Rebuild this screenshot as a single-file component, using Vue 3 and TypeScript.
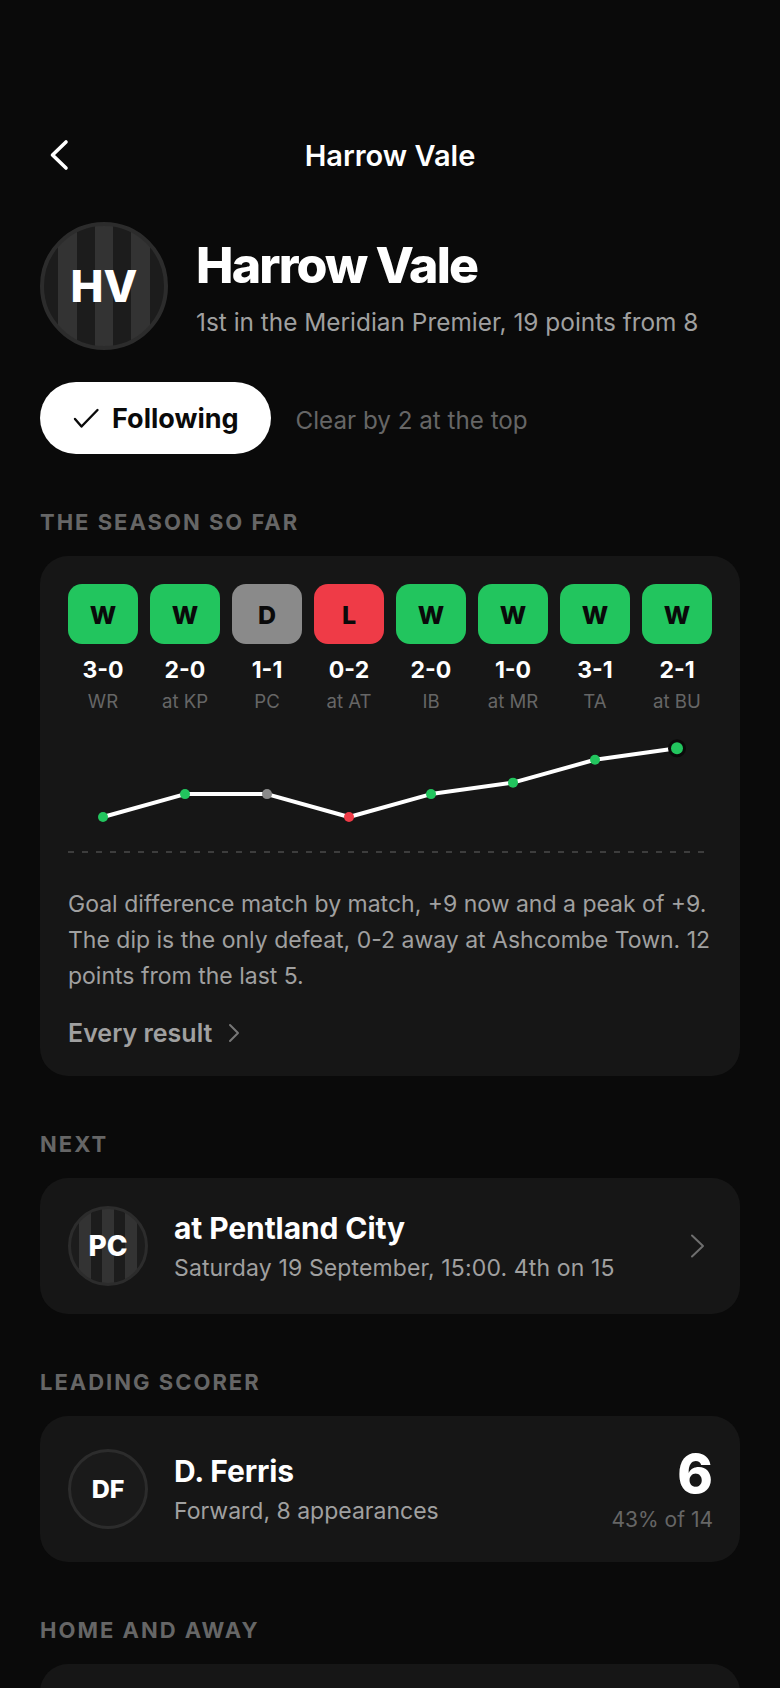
<script setup lang="ts">
import { computed } from 'vue';

interface Match {
    result: 'W' | 'D' | 'L',
    score: string,
    opponent: string,
    diff: number,
}

const matches: Match[] = [
    { result: 'W', score: '3-0', opponent: 'WR', diff: 3 },
    { result: 'W', score: '2-0', opponent: 'at KP', diff: 5 },
    { result: 'D', score: '1-1', opponent: 'PC', diff: 5 },
    { result: 'L', score: '0-2', opponent: 'at AT', diff: 3 },
    { result: 'W', score: '2-0', opponent: 'IB', diff: 5 },
    { result: 'W', score: '1-0', opponent: 'at MR', diff: 6 },
    { result: 'W', score: '3-1', opponent: 'TA', diff: 8 },
    { result: 'W', score: '2-1', opponent: 'at BU', diff: 9 },
];

const colours = { W: '#22c55e', D: '#8a8a8a', L: '#ef3b47' };

const points = computed(() => matches.map((m, i) => ({
    x: 35 + i * 82,
    y: 80 - (m.diff - 3) * 11.45,
    fill: colours[m.result],
    last: i === matches.length - 1,
})));

const line = computed(() => points.value.map((p) => `${p.x},${p.y}`).join(' '));
</script>

<template>
    <div class="screen">
        <header class="topbar">
            <svg class="back" width="32" height="32" viewBox="0 0 32 32" fill="none">
                <path d="M22 3 L8.5 16 L22 29" stroke="#fff" stroke-width="3.6" stroke-linecap="round" stroke-linejoin="round" />
            </svg>
            <span class="topbar-title">Harrow Vale</span>
        </header>

        <section class="hero">
            <div class="crest crest-large">HV</div>
            <div class="hero-text">
                <h1>Harrow Vale</h1>
                <p>1st in the Meridian Premier, 19 points from 8</p>
            </div>
        </section>

        <div class="follow-row">
            <button class="follow">
                <svg width="28" height="28" viewBox="0 0 28 28" fill="none">
                    <path d="M3 15 L9.5 22.5 L25.5 6" stroke="#0a0a0a" stroke-width="2.4" stroke-linecap="round" stroke-linejoin="round" />
                </svg>
                Following
            </button>
            <span class="follow-note">Clear by 2 at the top</span>
        </div>

        <h2 class="label">THE SEASON SO FAR</h2>
        <div class="card season">
            <div class="form">
                <div v-for="(m, i) in matches" :key="i" class="match">
                    <div class="tile" :class="'tile-' + m.result">{{ m.result }}</div>
                    <div class="score">{{ m.score }}</div>
                    <div class="opponent">{{ m.opponent }}</div>
                </div>
            </div>
            <svg class="chart" width="644" height="120" viewBox="0 0 644 120" fill="none">
                <line x1="0" y1="115" x2="636" y2="115" stroke="#3d3d3d" stroke-width="2" stroke-dasharray="6 8" />
                <polyline :points="line" stroke="#fff" stroke-width="4" stroke-linejoin="round" />
                <template v-for="p in points" :key="p.x">
                    <circle v-if="p.last" :cx="p.x" :cy="p.y" r="9" fill="#0a0a0a" />
                    <circle :cx="p.x" :cy="p.y" :r="p.last ? 6 : 5" :fill="p.fill" />
                </template>
            </svg>
            <p class="summary">Goal difference match by match, +9 now and a peak of +9. The dip is the only defeat, 0-2 away at Ashcombe Town. 12 points from the last 5.</p>
            <div class="every">
                Every result
                <svg width="12" height="20" viewBox="0 0 12 20" fill="none">
                    <path d="M2 2 L10 10 L2 18" stroke="#777" stroke-width="2" stroke-linecap="round" stroke-linejoin="round" />
                </svg>
            </div>
        </div>

        <h2 class="label">NEXT</h2>
        <div class="card row">
            <div class="crest crest-small">PC</div>
            <div class="row-text">
                <div class="row-title">at Pentland City</div>
                <div class="row-sub row-sub-next">Saturday 19 September, 15:00. 4th on 15</div>
            </div>
            <svg class="row-chevron" width="16" height="24" viewBox="0 0 16 24" fill="none">
                <path d="M2 1.5 L13 12 L2 22.5" stroke="#6e6e6e" stroke-width="2" stroke-linecap="round" stroke-linejoin="round" />
            </svg>
        </div>

        <h2 class="label">LEADING SCORER</h2>
        <div class="card row">
            <div class="player">DF</div>
            <div class="row-text">
                <div class="row-title">D. Ferris</div>
                <div class="row-sub">Forward, 8 appearances</div>
            </div>
            <div class="goals">
                <div class="goals-count">6</div>
                <div class="goals-share">43% of 14</div>
            </div>
        </div>

        <h2 class="label">HOME AND AWAY</h2>
        <div class="card home-away"></div>
    </div>
</template>

<style scoped>
.screen {
    height: 1688px;
    overflow: hidden;
    box-sizing: border-box;
    padding: 130px 40px 0;
    background: #0a0a0a;
    color: #fff;
    font-family: Inter, 'Liberation Sans', sans-serif;
}

.topbar {
    position: relative;
    display: flex;
    align-items: center;
    justify-content: center;
    height: 50px;
}

.back {
    position: absolute;
    left: 4px;
    top: 9px;
}

.topbar-title {
    font-size: 29px;
    font-weight: 600;
}

.hero {
    display: flex;
    align-items: center;
    gap: 28px;
    margin-top: 42px;
}

.crest {
    box-sizing: border-box;
    flex: none;
    display: flex;
    align-items: center;
    justify-content: center;
    border: 4px solid #2c2c2c;
    border-radius: 50%;
    background: linear-gradient(90deg, #1c1c1c 14.28%, #333 14.28% 28.57%, #1c1c1c 28.57% 42.85%, #333 42.85% 57.14%, #1c1c1c 57.14% 71.42%, #333 71.42% 85.71%, #1c1c1c 85.71%) border-box;
    font-weight: 800;
}

.crest-large {
    width: 128px;
    height: 128px;
    font-size: 44px;
}

.crest-small {
    width: 80px;
    height: 80px;
    font-size: 28px;
    border-width: 3px;
}

.hero-text h1 {
    margin: 0;
    font-size: 50px;
    line-height: 60px;
    font-weight: 800;
    letter-spacing: -1.8px;
}

.hero-text p {
    margin: 11px 0 0;
    font-size: 24.4px;
    line-height: 32px;
    color: #a0a0a0;
}

.follow-row {
    display: flex;
    align-items: center;
    gap: 25px;
    margin-top: 32px;
}

.follow {
    display: flex;
    align-items: center;
    gap: 12px;
    height: 72px;
    padding: 0 32px;
    border: none;
    border-radius: 36px;
    background: #fff;
    color: #0a0a0a;
    font-family: inherit;
    font-size: 27px;
    font-weight: 700;
}

.follow-note {
    padding-top: 4px;
    font-size: 24.2px;
    color: #666;
}

.label {
    margin: 54px 0 20px;
    font-size: 22px;
    line-height: 28px;
    font-weight: 700;
    letter-spacing: 2px;
    color: #666;
}

.card {
    background: #161616;
    border-radius: 28px;
}

.season {
    padding: 28px 28px 25px;
}

.form {
    display: grid;
    grid-template-columns: repeat(8, 70px);
    gap: 12px;
}

.match {
    text-align: center;
}

.tile {
    height: 60px;
    border-radius: 14px;
    color: #0a0a0a;
    font-size: 25px;
    line-height: 62px;
    font-weight: 800;
}

.tile-W {
    background: #22c55e;
}

.tile-D {
    background: #8a8a8a;
}

.tile-L {
    background: #ef3b47;
}

.score {
    margin-top: 11px;
    font-size: 23px;
    line-height: 30px;
    font-weight: 700;
}

.opponent {
    margin-top: 4px;
    font-size: 18.6px;
    line-height: 24px;
    color: #666;
}

.chart {
    display: block;
    margin-top: 24px;
}

.summary {
    margin: 29px 0 0;
    font-size: 23px;
    line-height: 36px;
    color: #a0a0a0;
}

.every {
    display: flex;
    align-items: center;
    gap: 16px;
    margin-top: 21px;
    font-size: 25px;
    line-height: 36px;
    font-weight: 600;
    color: #a0a0a0;
}

.row {
    display: flex;
    align-items: center;
    gap: 26px;
    padding: 28px;
}

.row-text {
    flex: 1;
    min-width: 0;
}

.row-title {
    font-size: 30px;
    line-height: 38px;
    font-weight: 700;
    letter-spacing: -0.1px;
}

.row-sub {
    margin-top: 5px;
    font-size: 23px;
    line-height: 32px;
    color: #a0a0a0;
}

.row-sub-next {
    letter-spacing: 0.14px;
}

.row-chevron {
    margin-right: 6px;
}

.player {
    box-sizing: border-box;
    flex: none;
    display: flex;
    align-items: center;
    justify-content: center;
    width: 80px;
    height: 80px;
    border: 3px solid #2c2c2c;
    border-radius: 50%;
    background: #1a1a1a;
    font-size: 25px;
    font-weight: 800;
}

.goals {
    margin-right: -1px;
    text-align: right;
}

.goals-count {
    font-size: 54px;
    line-height: 60px;
    font-weight: 800;
}

.goals-share {
    margin-top: 2px;
    font-size: 21px;
    line-height: 28px;
    color: #666;
}

.home-away {
    height: 200px;
}
</style>
